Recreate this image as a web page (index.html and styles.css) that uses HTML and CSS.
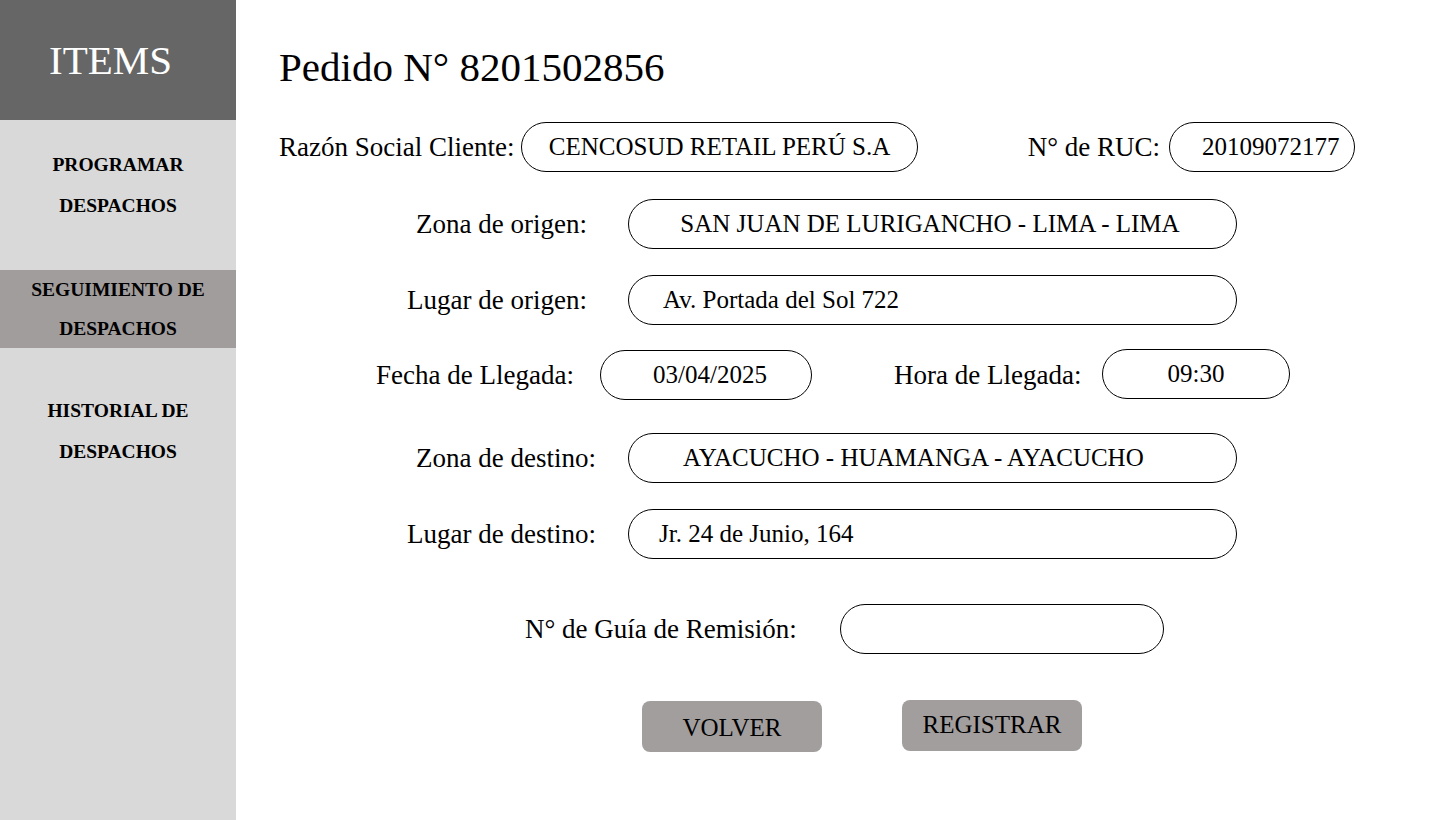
FILE: index.html
```html
<!DOCTYPE html>
<html lang="es">
<head>
<meta charset="utf-8">
<title>Pedido N° 8201502856</title>
<link rel="stylesheet" href="styles.css">
</head>
<body>
<div class="app">
  <aside class="sidebar">
    <div class="brand">ITEMS</div>
    <nav class="nav">
      <a class="nav-item nav-first">PROGRAMAR<br>DESPACHOS</a>
      <a class="nav-item nav-active">SEGUIMIENTO DE<br>DESPACHOS</a>
      <a class="nav-item nav-last">HISTORIAL DE<br>DESPACHOS</a>
    </nav>
  </aside>
  <main class="main">
    <h1 class="title">Pedido N° 8201502856</h1>

    <div class="row row-1">
      <span class="label lab-razon">Razón Social Cliente:</span>
      <div class="field f-razon">CENCOSUD RETAIL PERÚ S.A</div>
      <span class="label lab-ruc">N° de RUC:</span>
      <div class="field f-ruc">20109072177</div>
    </div>

    <div class="row row-2">
      <span class="label lab-zona">Zona de origen:</span>
      <div class="field f-wide f-center">SAN JUAN DE LURIGANCHO - LIMA - LIMA</div>
    </div>

    <div class="row row-3">
      <span class="label lab-lugar">Lugar de origen:</span>
      <div class="field f-wide f-left">Av. Portada del Sol 722</div>
    </div>

    <div class="row row-4">
      <span class="label lab-fecha">Fecha de Llegada:</span>
      <div class="field f-fecha">03/04/2025</div>
      <span class="label lab-hora">Hora de Llegada:</span>
      <div class="field f-hora">09:30</div>
    </div>

    <div class="row row-5">
      <span class="label lab-zona">Zona de destino:</span>
      <div class="field f-wide f-dest">AYACUCHO - HUAMANGA - AYACUCHO</div>
    </div>

    <div class="row row-6">
      <span class="label lab-lugar">Lugar de destino:</span>
      <div class="field f-wide f-left2">Jr. 24 de Junio, 164</div>
    </div>

    <div class="row row-7">
      <span class="label lab-guia">N° de Guía de Remisión:</span>
      <div class="field f-guia"></div>
    </div>

    <div class="actions">
      <button class="btn btn-volver">VOLVER</button>
      <button class="btn btn-registrar">REGISTRAR</button>
    </div>
  </main>
</div>
</body>
</html>
```
FILE: styles.css
```css
* { box-sizing: border-box; }

html, body {
  margin: 0;
  padding: 0;
  background: #ffffff;
}

body {
  font-family: "Liberation Serif", "Times New Roman", serif;
  color: #000000;
}

.app {
  display: flex;
  width: 1440px;
  height: 820px;
}

.sidebar {
  width: 236px;
  flex: none;
  background: #d9d9d9;
  display: flex;
  flex-direction: column;
}

.brand {
  height: 120px;
  background: #666666;
  color: #ffffff;
  font-size: 41px;
  display: flex;
  align-items: center;
  justify-content: center;
  padding-right: 15px;
}

.nav {
  display: flex;
  flex-direction: column;
}

.nav-item {
  display: block;
  text-align: center;
  font-weight: bold;
  font-size: 19.5px;
  line-height: 41px;
  color: #000;
}

.nav-first { margin-top: 24px; }

.nav-active {
  margin-top: 44px;
  height: 78px;
  line-height: 39px;
  background: #a29d9d;
}

.nav-last { margin-top: 42px; }

.main {
  flex: 1;
  padding: 43px 0 0 43px;
  display: flex;
  flex-direction: column;
}

.title {
  margin: 0;
  font-weight: normal;
  font-size: 41px;
  line-height: 48px;
}

.row {
  display: flex;
  align-items: center;
  height: 50px;
}

.label {
  font-size: 27px;
  white-space: nowrap;
  flex: none;
}

.field {
  flex: none;
  height: 50px;
  border: 1px solid #000;
  border-radius: 25px;
  font-size: 25px;
  display: flex;
  align-items: center;
  white-space: nowrap;
}

/* row 1 */
.row-1 { margin-top: 31px; }
.lab-razon { width: 242px; }
.f-razon { width: 397px; justify-content: center; }
.lab-ruc { width: 251px; text-align: right; padding-right: 9px; }
.f-ruc { width: 186px; padding-left: 32px; }

/* shared wide field */
.f-wide { width: 609px; }
.f-center { justify-content: center; padding-right: 5px; }
.f-left { padding-left: 34px; }
.f-dest { padding-left: 54px; }
.f-left2 { padding-left: 30px; }

.lab-zona { margin-left: 137px; width: 212px; }
.lab-lugar { margin-left: 128px; width: 221px; }

.row-2 { margin-top: 27px; }
.row-3 { margin-top: 26px; }

/* row 4 */
.row-4 { margin-top: 25px; }
.lab-fecha { margin-left: 97px; width: 224px; }
.f-fecha { width: 212px; justify-content: center; padding-left: 8px; }
.lab-hora { margin-left: 82px; width: 208px; }
.f-hora { width: 188px; justify-content: center; margin-top: -3px; }

.row-5 { margin-top: 33px; }
.row-6 { margin-top: 26px; }

/* row 7 */
.row-7 { margin-top: 45px; }
.lab-guia { margin-left: 246px; width: 315px; }
.f-guia { width: 324px; }

/* buttons */
.actions {
  display: flex;
  gap: 80px;
  margin-top: 46px;
  padding-left: 363px;
  align-items: flex-start;
}

.btn {
  width: 180px;
  height: 51px;
  border: none;
  border-radius: 8px;
  background: #a39e9e;
  font-family: "Liberation Serif", "Times New Roman", serif;
  font-size: 25px;
  color: #000;
  padding: 0;
}

.btn-volver { margin-top: 1px; padding-top: 2px; }
.btn-registrar { padding-bottom: 2px; }
```
